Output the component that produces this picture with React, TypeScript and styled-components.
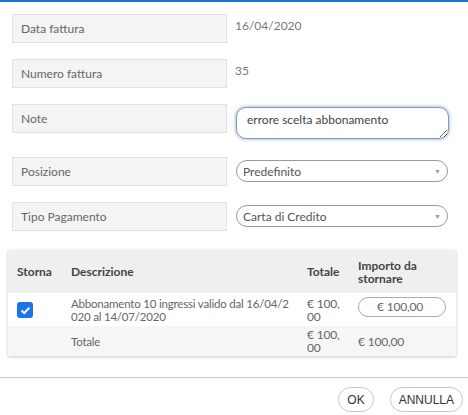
import styled, { createGlobalStyle } from 'styled-components';

const font = `"Lato", "Open Sans", sans-serif`;

const GlobalStyle = createGlobalStyle`
  * { box-sizing: border-box; }
  body { margin: 0; background: #fff; font-family: ${font}; }
`;

const Page = styled.div`
  width: 468px;
  height: 415px;
  border-top: 2px solid #1976d2;
  background: #fff;
  overflow: hidden;
`;

const Form = styled.div`
  padding: 12px 20px 0 12px;
  display: flex;
  flex-direction: column;
  gap: 16px;
`;

const Row = styled.div<{ $tall?: boolean }>`
  display: grid;
  grid-template-columns: 215px 1fr;
  column-gap: 8px;
  align-items: start;
  min-height: ${(p) => (p.$tall ? '37px' : '29px')};
`;

const Label = styled.div`
  height: 29px;
  display: flex;
  align-items: center;
  padding-left: 8px;
  background: #f4f4f4;
  border: 1px solid #e2e2e2;
  color: #666;
  font-size: 12px;
`;

const Value = styled.div`
  padding-top: 5px;
  color: #777;
  font-size: 12px;
  line-height: 14px;
`;

const TextArea = styled.textarea`
  margin: 3px 0 0 1px;
  width: 213px;
  height: 32px;
  border: 1px solid #8a9ab0;
  border-radius: 10px;
  box-shadow: 0 0 3px 1px rgba(90, 130, 190, 0.45);
  padding: 4px 10px;
  font-family: ${font};
  font-size: 12px;
  color: #444;
  outline: none;
`;

const Select = styled.div`
  margin: 3px 0 0 1px;
  height: 22px;
  width: 212px;
  border: 1px solid #9a9a9a;
  border-radius: 11px;
  display: flex;
  align-items: center;
  justify-content: space-between;
  padding: 0 6px 0 6px;
  color: #555;
  font-size: 12px;
`;

const Caret = styled.span`
  color: #999;
  font-size: 7px;
`;

const TableWrap = styled.div`
  margin: 19px 12px 0 8px;
  box-shadow: 0 1px 3px rgba(0, 0, 0, 0.22);
`;

const Table = styled.table`
  width: 100%;
  border-collapse: collapse;
  table-layout: fixed;
  font-size: 12px;
`;

const Th = styled.th<{ $w?: number }>`
  width: ${(p) => (p.$w ? `${p.$w}px` : 'auto')};
  background: #efefef;
  height: 43px;
  padding: 0 8px 0 9px;
  text-align: left;
  font-weight: 700;
  color: #444;
  line-height: 13px;
`;

const Tr = styled.tr<{ $shade?: boolean }>`
  background: ${(p) => (p.$shade ? '#f6f6f6' : '#fff')};
`;

const Td = styled.td<{ $h: number; $desc?: boolean }>`
  height: ${(p) => p.$h}px;
  padding: ${(p) => (p.$desc ? '0 4px 0 9px' : '0 7px 0 9px')};
  font-size: ${(p) => (p.$desc ? '11.5px' : '12px')};
  color: #666;
  line-height: 13px;
  letter-spacing: -0.2px;
  word-break: break-all;
  vertical-align: middle;
`;

const Check = styled.span`
  display: inline-flex;
  width: 16px;
  height: 16px;
  border-radius: 3px;
  background: #1a73e8;
  align-items: center;
  justify-content: center;
  margin-top: 1px;
`;

const Amount = styled.div`
  width: 88px;
  height: 20px;
  border: 1px solid #aaa;
  border-radius: 10px;
  padding-left: 18px;
  display: flex;
  align-items: center;
  color: #666;
  margin-top: -6px;
`;

const Divider = styled.div`
  margin-top: 21px;
  border-top: 1px solid #ccc;
`;

const Footer = styled.div`
  display: flex;
  justify-content: flex-end;
  gap: 16px;
  padding: 9px 5px 0 0;
`;

const Button = styled.button`
  height: 25px;
  padding: 0 8px;
  border: 1px solid #c8c8c8;
  border-radius: 13px;
  background: #fff;
  color: #333;
  font-family: "Liberation Sans", Arial, sans-serif;
  font-size: 12px;
`;

export default function App() {
  return (
    <>
      <GlobalStyle />
      <Page>
        <Form>
          <Row>
            <Label>Data fattura</Label>
            <Value>16/04/2020</Value>
          </Row>
          <Row>
            <Label>Numero fattura</Label>
            <Value>35</Value>
          </Row>
          <Row $tall>
            <Label>Note</Label>
            <TextArea defaultValue="errore scelta abbonamento" spellCheck={false} />
          </Row>
          <Row>
            <Label>Posizione</Label>
            <Select>
              Predefinito<Caret>▼</Caret>
            </Select>
          </Row>
          <Row>
            <Label>Tipo Pagamento</Label>
            <Select>
              Carta di Credito<Caret>▼</Caret>
            </Select>
          </Row>
        </Form>
        <TableWrap>
          <Table>
            <thead>
              <tr>
                <Th $w={54}>Storna</Th>
                <Th>Descrizione</Th>
                <Th $w={51}>Totale</Th>
                <Th $w={107}>Importo da stornare</Th>
              </tr>
            </thead>
            <tbody>
              <Tr>
                <Td $h={33}>
                  <Check>
                    <svg width="11" height="9" viewBox="0 0 11 9">
                      <path d="M1.5 4.5 L4.2 7 L9.5 1.6" fill="none" stroke="#fff" strokeWidth="2" />
                    </svg>
                  </Check>
                </Td>
                <Td $h={33} $desc>
                  Abbonamento 10 ingressi valido dal 16/04/2020 al 14/07/2020
                </Td>
                <Td $h={33}>€ 100,00</Td>
                <Td $h={33}>
                  <Amount>€ 100,00</Amount>
                </Td>
              </Tr>
              <Tr $shade>
                <Td $h={30}></Td>
                <Td $h={30} $desc>
                  Totale
                </Td>
                <Td $h={30}>€ 100,00</Td>
                <Td $h={30}>€ 100,00</Td>
              </Tr>
            </tbody>
          </Table>
        </TableWrap>
        <Divider />
        <Footer>
          <Button>OK</Button>
          <Button>ANNULLA</Button>
        </Footer>
      </Page>
    </>
  );
}
